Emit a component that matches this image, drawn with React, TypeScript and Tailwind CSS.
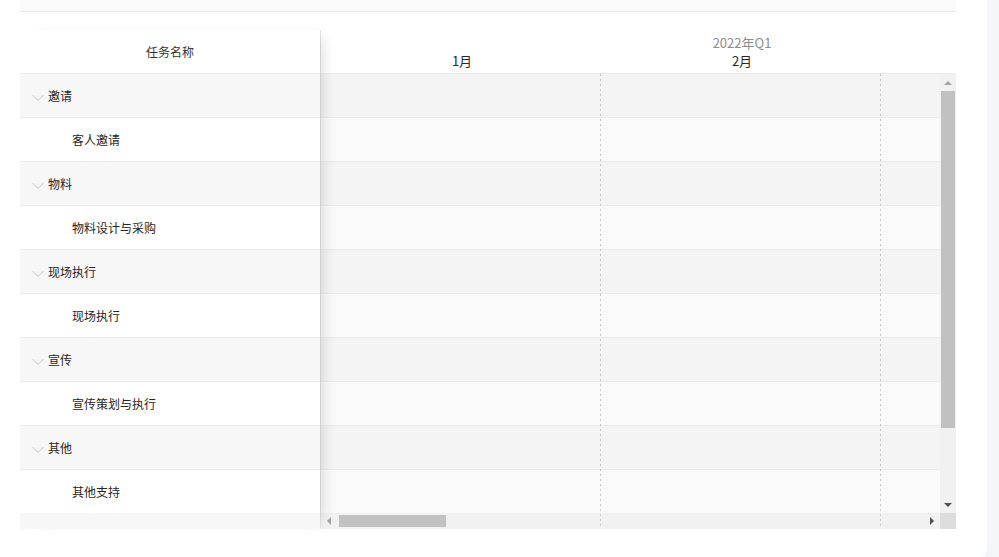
import { ChevronDown } from 'lucide-react';

const rows = [
  { name: '邀请', group: true },
  { name: '客人邀请', group: false },
  { name: '物料', group: true },
  { name: '物料设计与采购', group: false },
  { name: '现场执行', group: true },
  { name: '现场执行', group: false },
  { name: '宣传', group: true },
  { name: '宣传策划与执行', group: false },
  { name: '其他', group: true },
  { name: '其他支持', group: false },
];

const dotted =
  'absolute top-0 bottom-0 w-px bg-[repeating-linear-gradient(to_bottom,#c4c4c4_0_2px,transparent_2px_5px)]';

function TaskTable() {
  return (
    <div className="relative z-10 flex w-[300px] shrink-0 flex-col bg-white shadow-[10px_0_14px_-8px_rgba(0,0,0,0.14)]">
      <div className="flex h-[44px] shrink-0 items-center justify-center border-b border-[#ebebeb] text-[12px] text-[#333]">
        任务名称
      </div>
      <div className="flex-1 overflow-hidden">
        {rows.map((r, i) => (
          <div
            key={i}
            className={[
              'flex h-[44px] items-center border-b border-[#ebebeb] text-[12px] text-[#262626]',
              r.group ? 'bg-[#f7f7f7] pl-[8px]' : 'bg-white pl-[52px]',
            ].join(' ')}
          >
            {r.group && <ChevronDown size={20} strokeWidth={0.9} className="mt-[4px] text-[#b0b0b0]" />}
            {r.name}
          </div>
        ))}
      </div>
      <div className="h-[16px] shrink-0 bg-[#f7f7f7]" />
    </div>
  );
}

function Chart() {
  return (
    <div className="relative flex w-[636px] shrink-0 flex-col overflow-hidden border-l border-[#e3e3e3] bg-white">
      {/* timeline header */}
      <div className="relative h-[44px] shrink-0 border-b border-[#ebebeb]">
        <div className="flex h-[20px] w-[840px] items-end justify-center pl-[2px] text-[13px] leading-[15px] text-[#8c8c8c]">
          2022年Q1
        </div>
        <div className="flex h-[21px] items-center text-[13px] leading-[15px] text-[#262626]">
          <div className="w-[280px] shrink-0 pl-[2px] text-center">1月</div>
          <div className="w-[280px] shrink-0 pl-[2px] text-center">2月</div>
        </div>
      </div>

      {/* body */}
      <div className="flex flex-1 overflow-hidden">
        <div className="flex-1 overflow-hidden">
          {rows.map((r, i) => (
            <div
              key={i}
              className={[
                'h-[44px] border-b border-[#ebebeb]',
                r.group ? 'bg-[#f4f4f4]' : 'bg-[#fafafa]',
              ].join(' ')}
            />
          ))}
        </div>
        {/* vertical scrollbar */}
        <div className="flex w-[16px] shrink-0 flex-col items-center bg-[#f1f1f1]">
          <div className="flex h-[17px] items-center justify-center">
            <div className="h-0 w-0 border-x-[4px] border-b-[4px] border-x-transparent border-b-[#a3a3a3]" />
          </div>
          <div className="h-[337px] w-[14px] bg-[#c1c1c1]" />
          <div className="flex-1" />
          <div className="flex h-[17px] items-center justify-center">
            <div className="h-0 w-0 border-x-[4px] border-t-[4px] border-x-transparent border-t-[#505050]" />
          </div>
        </div>
      </div>

      {/* horizontal scrollbar */}
      <div className="flex h-[16px] shrink-0">
        <div className="flex flex-1 items-center bg-[#f1f1f1]">
          <div className="ml-[6px] mr-[8px] h-0 w-0 border-y-[4px] border-r-[4px] border-y-transparent border-r-[#a3a3a3]" />
          <div className="h-[12px] w-[107px] bg-[#c1c1c1]" />
          <div className="flex-1" />
          <div className="mr-[6px] h-0 w-0 border-y-[4px] border-l-[4px] border-y-transparent border-l-[#505050]" />
        </div>
        <div className="w-[16px] bg-[#dcdcdc]" />
      </div>

      {/* month grid lines */}
      <div className={`${dotted} left-[279px] top-[44px]`} />
      <div className={`${dotted} left-[559px] top-[44px]`} />
    </div>
  );
}

export default function App() {
  return (
    <div
      className="flex h-[557px] w-full overflow-hidden bg-[#f4f5f9]"
      style={{ fontFamily: '"Noto Sans CJK SC", "Noto Sans", sans-serif' }}
    >
      <div className="h-[557px] w-[987px] shrink-0 rounded-br-[8px] bg-white pl-[20px]">
        <div className="h-[12px] w-[936px] border-b border-[#e8e8e8] bg-[#fafafa]" />
        <div className="mt-[18px] flex h-[499px] w-[936px]">
          <TaskTable />
          <Chart />
        </div>
      </div>
    </div>
  );
}
